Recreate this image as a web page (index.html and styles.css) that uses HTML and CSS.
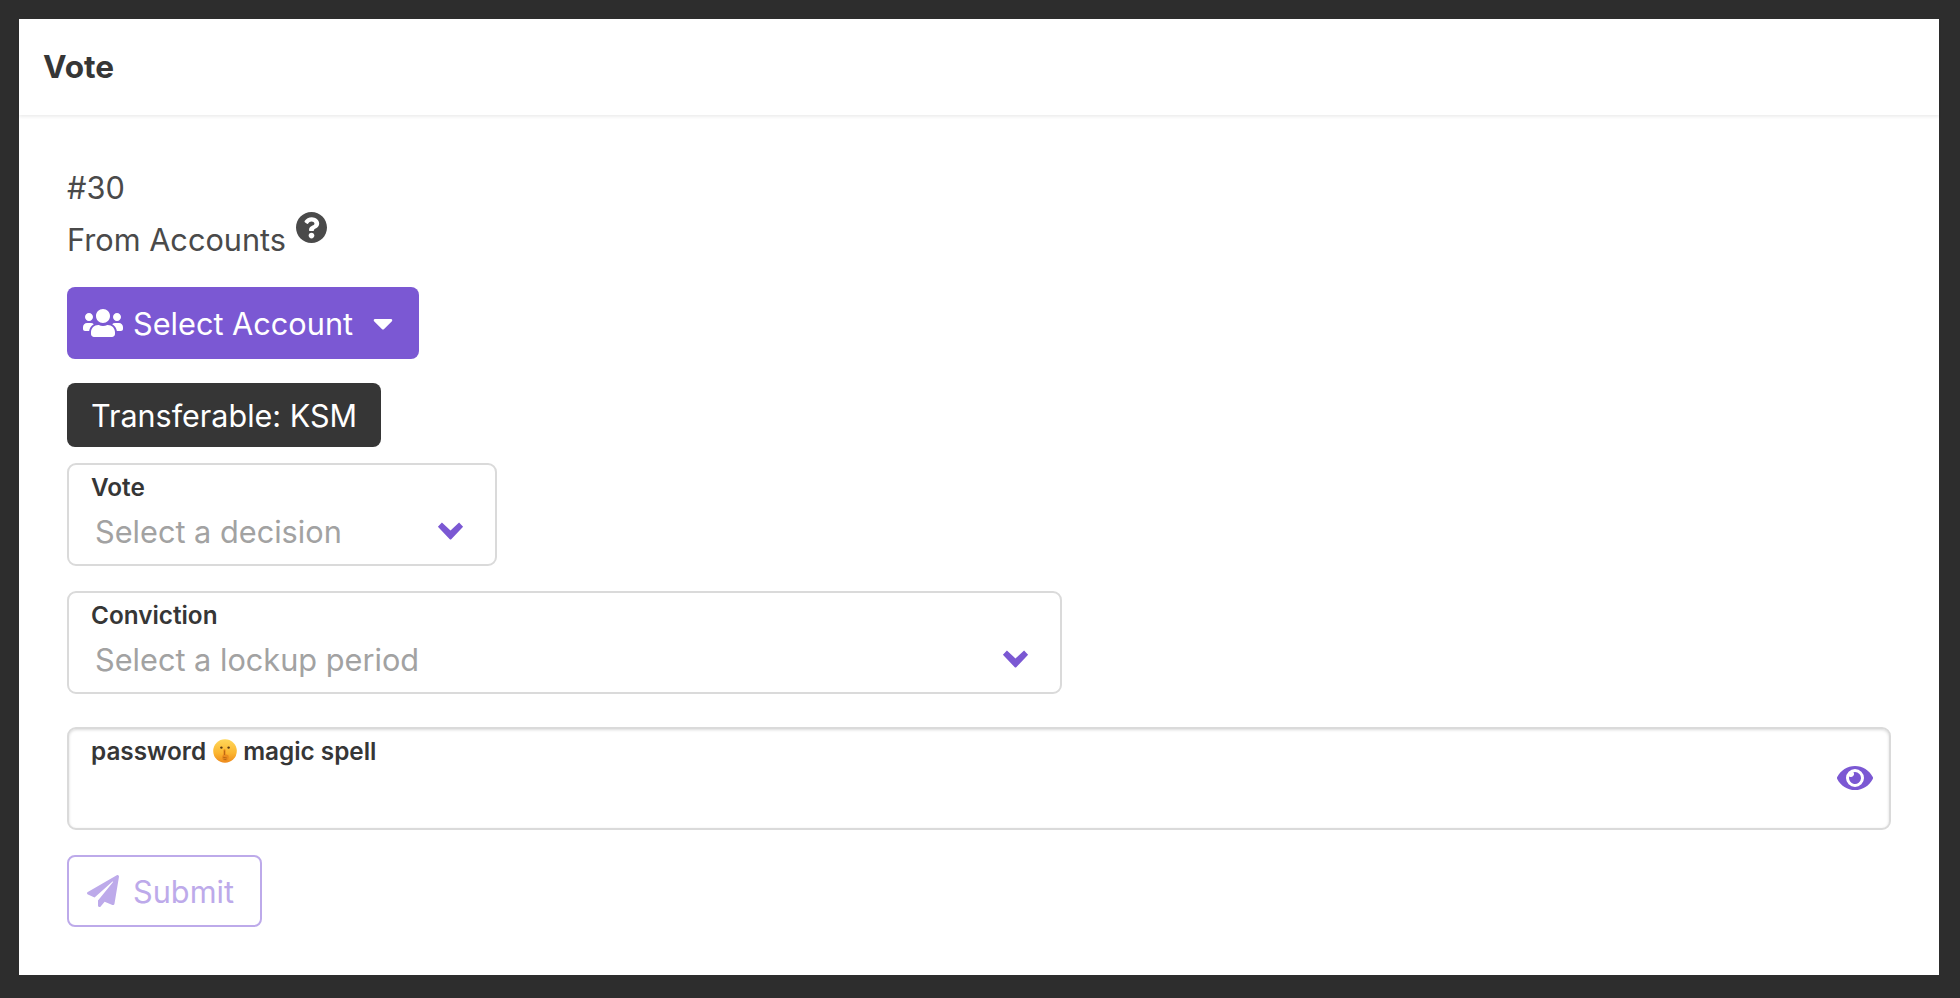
FILE: index.html
```html
<!DOCTYPE html>
<html lang="en">
<head>
<meta charset="utf-8">
<title>Vote</title>
<link rel="stylesheet" href="styles.css">
</head>
<body>
<div class="card">
  <header class="card-header">Vote</header>
  <main class="card-body">
    <div class="line">#30</div>
    <div class="line from">
      <span>From Accounts</span>
      <svg class="icon-help" viewBox="8 8 496 496"><path d="M504 256c0 136.997-111.043 248-248 248S8 392.997 8 256C8 119.083 119.043 8 256 8s248 111.083 248 248zM262.655 90c-54.497 0-89.255 22.957-116.549 63.758-3.536 5.286-2.353 12.415 2.715 16.258l34.699 26.31c5.205 3.947 12.621 3.008 16.665-2.122 17.864-22.658 30.113-35.797 57.303-35.797 20.429 0 45.698 13.148 45.698 32.958 0 14.976-12.363 22.667-32.534 33.976C247.128 238.528 216 254.941 216 296v4c0 6.627 5.373 12 12 12h56c6.627 0 12-5.373 12-12v-1.333c0-28.462 83.186-29.647 83.186-106.667 0-58.002-60.165-102-116.531-102zM256 338c-25.365 0-46 20.635-46 46 0 25.364 20.635 46 46 46s46-20.636 46-46c0-25.365-20.635-46-46-46z"/></svg>
    </div>
    <button class="btn btn-primary" type="button">
      <svg class="icon-users" viewBox="0 0 640 512"><path d="M96 224c35.3 0 64-28.7 64-64s-28.7-64-64-64-64 28.7-64 64 28.7 64 64 64zm448 0c35.3 0 64-28.7 64-64s-28.7-64-64-64-64 28.7-64 64 28.7 64 64 64zm32 32h-64c-17.6 0-33.5 7.1-45.1 18.6 40.3 22.1 68.9 62 75.1 109.4h66c17.7 0 32-14.3 32-32v-32c0-35.3-28.7-64-64-64zm-256 0c61.9 0 112-50.1 112-112S381.9 32 320 32 208 82.1 208 144s50.1 112 112 112zm76.8 32h-8.3c-20.8 10-43.9 16-68.5 16s-47.6-6-68.5-16h-8.3C179.6 288 128 339.6 128 403.2V432c0 26.5 21.5 48 48 48h288c26.5 0 48-21.5 48-48v-28.8c0-63.6-51.6-115.2-115.2-115.2zm-223.7-13.4C161.5 263.1 145.6 256 128 256H64c-35.3 0-64 28.7-64 64v32c0 17.7 14.3 32 32 32h65.9c6.3-47.4 34.9-87.3 75.2-109.4z"/></svg>
      <span class="btn-text">Select Account</span>
      <svg class="icon-caret" viewBox="0 0 320 512"><path d="M31.3 192h257.3c17.8 0 26.7 21.5 14.1 34.1L174.1 354.8c-7.8 7.8-20.5 7.8-28.3 0L17.2 226.1C4.6 213.5 13.5 192 31.3 192z"/></svg>
    </button>
    <div class="tag">Transferable: KSM</div>
    <div class="field field-vote">
      <div class="label">Vote</div>
      <div class="control">
        <span class="placeholder">Select a decision</span>
        <svg class="icon-chevron" viewBox="0 0 25 17"><path d="M.6 4.6 4.400.4 12.500 8 20.600.4 24.400 4.600 13.200 16.300a1 1 0 0 1-1.400 0z"/></svg>
      </div>
    </div>
    <div class="field field-conviction">
      <div class="label">Conviction</div>
      <div class="control">
        <span class="placeholder">Select a lockup period</span>
        <svg class="icon-chevron" viewBox="0 0 25 17"><path d="M.6 4.6 4.400.4 12.500 8 20.600.4 24.400 4.600 13.200 16.300a1 1 0 0 1-1.400 0z"/></svg>
      </div>
    </div>
    <div class="field field-password">
      <div class="label label-password">password
        <svg class="emoji" viewBox="0 0 24 24">
          <defs>
            <linearGradient id="face" x1="0" y1="0" x2="0" y2="1"><stop offset="0" stop-color="#ffd75a"/><stop offset="0.6" stop-color="#fbb52f"/><stop offset="1" stop-color="#ee8a1c"/></linearGradient>
          </defs>
          <circle cx="12" cy="12" r="11.800" fill="url(#face)"/>
          <circle cx="8.400" cy="8.600" r="1.200" fill="#5b3a16"/>
          <circle cx="15.600" cy="8.600" r="1.200" fill="#5b3a16"/>
          <path d="M10.400 11.200c0-1.300 2.200-1.300 2.200 0v4l2.300.7c1.200.5 1.300 4.200-.8 5.600-2 1.100-4.800.1-5-2.600-.1-2.200 1.300-3 1.300-4z" fill="#ea8b1e"/>
          <path d="M11.500 11.500v4.500M10 18.200l3.800.8M10.500 20.200l3 .5" stroke="#a85a10" stroke-width=".7" fill="none"/>
        </svg>
        magic spell</div>
      <svg class="icon-eye" viewBox="0 0 576 512"><path d="M572.52 241.4C518.29 135.59 410.93 64 288 64S57.68 135.64 3.48 241.41a32.35 32.35 0 0 0 0 29.19C57.71 376.41 165.07 448 288 448s230.32-71.64 284.52-177.41a32.35 32.35 0 0 0 0-29.19zM288 400a144 144 0 1 1 144-144 143.93 143.93 0 0 1-144 144zm0-240a95.31 95.31 0 0 0-25.31 3.79 47.85 47.85 0 0 1-66.9 66.9A95.78 95.78 0 1 0 288 160z"/></svg>
    </div>
    <button class="btn btn-submit" type="button" disabled>
      <svg class="icon-plane" viewBox="0 0 512 512"><path d="M476 3.2L12.5 270.6c-18.1 10.4-15.8 35.6 2.2 43.2L121 358.4l287.3-253.2c5.500-4.900 13.300 2.600 8.600 8.300L176 407v80.500c0 23.600 28.500 32.900 42.500 15.800L282 426l124.600 52.200c14.200 6 30.400-2.900 33-18.200l72-432C515 7.800 493.300-6.800 476 3.200z"/></svg>
      <span class="btn-text">Submit</span>
    </button>
  </main>
</div>
</body>
</html>
```
FILE: styles.css
```css
* { box-sizing: border-box; }
html, body { height: 100%; }
body {
  margin: 0;
  padding: 19px 21px 23px 19px;
  background: #2d2d2d;
  font-family: Inter, "Liberation Sans", sans-serif;
  font-size: 30.7px;
  line-height: 52px;
  color: #4a4a4a;
}
.card {
  height: 100%;
  background: #fff;
  display: flex;
  flex-direction: column;
}
.card-header {
  height: 96px;
  flex: none;
  padding-left: 24px;
  display: flex;
  align-items: center;
  font-size: 31.6px;
  font-weight: 700;
  color: #363636;
  box-shadow: 0 2px 3px rgba(0, 0, 0, .07);
  position: relative;
}
.card-body {
  padding: 47px 48px 0;
  display: flex;
  flex-direction: column;
  align-items: flex-start;
}
.from { display: flex; align-items: flex-start; }
.icon-help { width: 31px; height: 31px; margin: -2px 0 0 10px; fill: #4a4a4a; }
.btn {
  font: inherit;
  height: 72px;
  display: flex;
  align-items: center;
  border-radius: 8px;
  padding: 0;
}
.btn-text { padding-top: 2px; }
.btn-primary {
  margin-top: 21px;
  width: 352px;
  padding-left: 16px;
  border: 0;
  background: #7b58d3;
  color: #fff;
}
.icon-users { width: 40px; height: 32px; fill: #fff; margin-right: 10px; }
.icon-caret { width: 20px; height: 32px; fill: #fff; margin-left: 20px; }
.tag {
  margin-top: 24px;
  height: 64px;
  padding: 2px 24px 0;
  width: 314px;
  font-size: 30.5px;
  display: flex;
  align-items: center;
  border-radius: 8px;
  background: #363636;
  color: #fff;
}
.field {
  height: 103px;
  border: 2px solid #dadada;
  border-radius: 9px;
  background: #fff;
  padding: 0 22px;
}
.field-vote { margin-top: 16px; width: 430px; }
.field-conviction { margin-top: 25px; width: 995px; }
.field-password {
  margin-top: 33px;
  width: 1824px;
  position: relative;
  box-shadow: inset 0 1px 3px rgba(0, 0, 0, .15);
}
.label {
  font-size: 24.3px;
  font-weight: 600;
  line-height: 36px;
  padding-top: 4px;
  box-sizing: content-box;
  color: #363636;
}
.label-password { display: flex; align-items: center; }
.emoji { width: 24px; height: 24px; margin: 0 6px 0 7px; }
.control {
  display: flex;
  align-items: center;
  justify-content: space-between;
  padding-left: 4px;
  height: 54px;
}
.placeholder { color: #a2a2a2; }
.icon-chevron { width: 27px; height: 18px; fill: #7b58d3; margin: -3px 9px 0 0; }
.icon-eye {
  position: absolute;
  right: 16px;
  top: 33px;
  width: 36px;
  height: 32px;
  fill: #7b58d3;
}
.btn-submit {
  margin-top: 25px;
  width: 195px;
  padding-left: 18px;
  border: 2px solid #bdaaea;
  background: #fff;
  color: #bdaaea;
}
.icon-plane { width: 32px; height: 32px; fill: #bdaaea; margin-right: 14px; }
```
